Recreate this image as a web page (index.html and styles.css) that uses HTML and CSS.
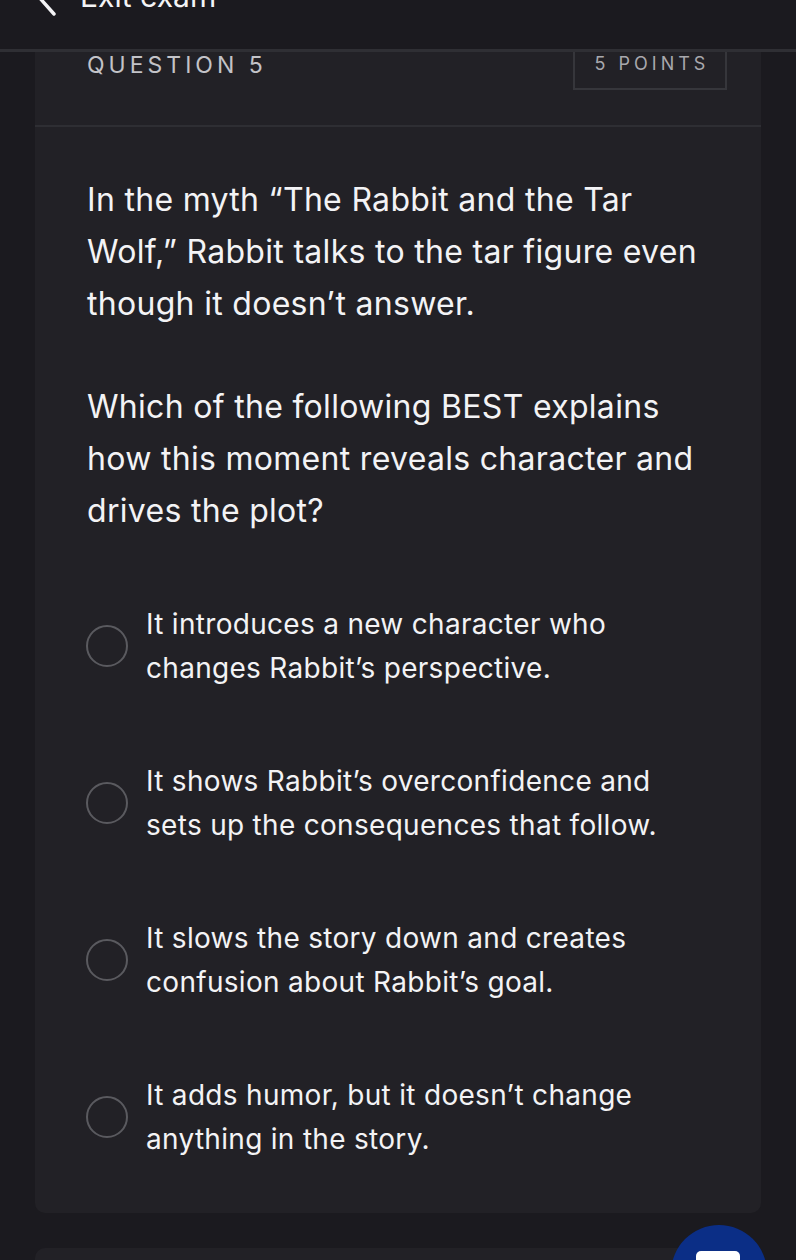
FILE: index.html
```html
<!DOCTYPE html>
<html lang="en">
<head>
<meta charset="utf-8">
<title>Question 5</title>
<link rel="stylesheet" href="styles.css">
</head>
<body>
<header class="topbar">
  <div class="topbar-row">
    <svg class="back" width="24" height="44" viewBox="0 0 24 44" aria-hidden="true"><path d="M20 4 L4 22 L20 40" fill="none" stroke="#f4f4f6" stroke-width="3.4" stroke-linecap="round" stroke-linejoin="round"/></svg>
    <span class="exit">Exit exam</span>
  </div>
</header>
<main class="card">
  <div class="card-head">
    <span class="qnum">QUESTION 5</span>
    <span class="points">5 POINTS</span>
  </div>
  <div class="card-body">
    <p class="prompt">In the myth “The Rabbit and the Tar Wolf,” Rabbit talks to the tar figure even though it doesn’t answer.</p>
    <p class="prompt">Which of the following BEST explains how this moment reveals character and drives the plot?</p>
    <ul class="options">
      <li class="option"><span class="radio"></span><span class="opt-text">It introduces a new character who changes Rabbit’s perspective.</span></li>
      <li class="option"><span class="radio"></span><span class="opt-text">It shows Rabbit’s overconfidence and sets up the consequences that follow.</span></li>
      <li class="option"><span class="radio"></span><span class="opt-text">It slows the story down and creates confusion about Rabbit’s goal.</span></li>
      <li class="option"><span class="radio"></span><span class="opt-text">It adds humor, but it doesn’t change anything in the story.</span></li>
    </ul>
  </div>
</main>
<div class="next-card"></div>
<button class="fab" aria-label="Open"><span class="fab-icon"></span></button>
</body>
</html>
```
FILE: styles.css
```css
html, body {
  margin: 0;
  padding: 0;
}
body {
  background: #1b1a1f;
  font-family: Inter, "Noto Sans", "Liberation Sans", sans-serif;
  color: #f3f3f5;
  height: 1260px;
  overflow: hidden;
  position: relative;
}
.topbar {
  height: 49px;
  border-bottom: 3px solid #2f2f34;
  overflow: hidden;
}
.topbar-row {
  display: flex;
  align-items: center;
  gap: 22px;
  margin-top: -26px;
  padding-left: 34px;
}
.back {
  display: block;
}
.exit {
  font-size: 30px;
  line-height: 44px;
  color: #f4f4f6;
}
.card {
  margin: 0 35px;
  background: #222126;
  border-radius: 0 0 10px 10px;
}
.card-head {
  display: flex;
  justify-content: space-between;
  align-items: flex-start;
  height: 73px;
  padding: 0 34px 0 52px;
  border-bottom: 2px solid #2e2e33;
}
.qnum {
  font-size: 23px;
  line-height: 26px;
  letter-spacing: 4px;
  color: #c3c3c8;
}
.points {
  box-sizing: border-box;
  width: 154px;
  height: 38px;
  border: 2px solid #36363b;
  border-top: none;
  text-align: center;
  font-size: 18px;
  line-height: 24px;
  letter-spacing: 4px;
  padding-left: 4px;
  color: #a8a8ad;
}
.card-body {
  padding: 47px 52px 52px 52px;
}
.prompt {
  margin: 0 0 51px 0;
  font-size: 32px;
  line-height: 52px;
  letter-spacing: 0.3px;
}
.prompt + .prompt {
  margin-bottom: 0;
}
.options {
  list-style: none;
  margin: 65px 0 0 0;
  padding: 0;
  display: flex;
  flex-direction: column;
  gap: 69px;
}
.option {
  display: flex;
  align-items: center;
  gap: 18px;
}
.radio {
  flex: none;
  box-sizing: border-box;
  width: 42px;
  height: 42px;
  border-radius: 50%;
  border: 2px solid #5a5a5f;
  margin-left: -1px;
}
.opt-text {
  font-size: 28px;
  line-height: 44px;
  letter-spacing: 0.3px;
}
.next-card {
  margin: 35px 35px 0 35px;
  height: 60px;
  background: #222126;
  border-radius: 10px 10px 0 0;
}
.fab {
  position: absolute;
  left: 671px;
  top: 1225px;
  width: 96px;
  height: 96px;
  border-radius: 50%;
  border: none;
  padding: 0;
  background: #0b2e86;
}
.fab-icon {
  position: absolute;
  left: 25px;
  top: 26px;
  width: 44px;
  height: 30px;
  background: #ffffff;
  border-radius: 5px;
}
```
